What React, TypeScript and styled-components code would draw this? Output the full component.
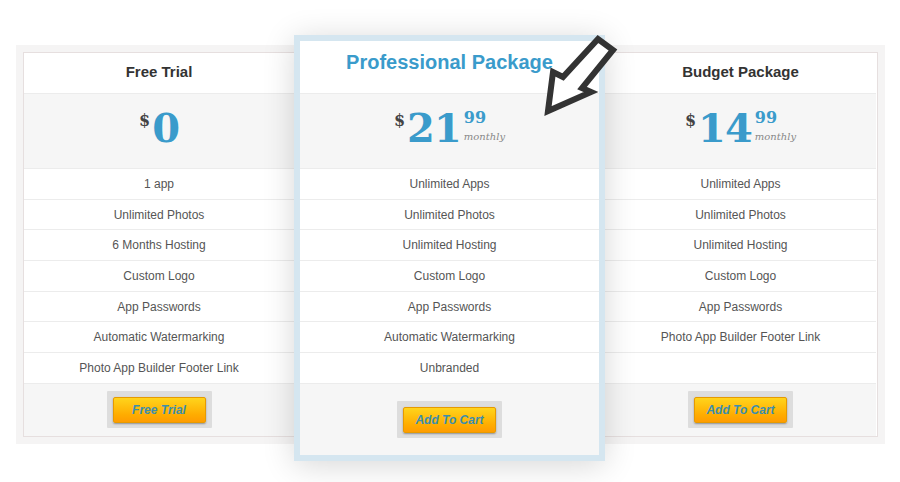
import React from 'react';
import styled, { createGlobalStyle } from 'styled-components';

const GlobalStyle = createGlobalStyle`
  html, body {
    margin: 0;
    padding: 0;
    background: #ffffff;
  }
  body {
    font-family: 'Liberation Sans', Arial, sans-serif;
  }
  * {
    box-sizing: border-box;
  }
`;

const Page = styled.div`
  padding: 45px 0 38px 16px;
  width: 885px;
  min-height: 482px;
`;

const Stage = styled.div`
  position: relative;
`;

const Frame = styled.div`
  background: #f5f4f4;
  padding: 7px;
`;

const Table = styled.div`
  display: flex;
  align-items: flex-start;
  border: 1px solid #e6dfdf;
  background: #ffffff;
`;

const Column = styled.div<{ width: number }>`
  width: ${(p) => p.width}px;
  flex-shrink: 0;
  display: flex;
  flex-direction: column;
  background: #ffffff;
`;

const FeaturedColumn = styled(Column)`
  margin: -18px 0 -25px;
  border: 6px solid #d5e6f0;
  box-shadow: 0 4px 30px rgba(0, 0, 0, 0.16);
  z-index: 1;
`;

const Header = styled.div<{ height: number; featured?: boolean }>`
  height: ${(p) => p.height}px;
  flex-shrink: 0;
  padding-top: 9px;
  text-align: center;
  font-size: ${(p) => (p.featured ? 20 : 15)}px;
  line-height: ${(p) => (p.featured ? 24 : 20)}px;
  font-weight: bold;
  color: ${(p) => (p.featured ? '#3a9bcb' : '#333333')};
`;

const PriceBox = styled.div`
  height: 75px;
  flex-shrink: 0;
  border-top: 1px solid #ececec;
  background: #f6f6f6;
  display: flex;
  justify-content: center;
  align-items: center;
  padding-bottom: 6px;
`;

const Price = styled.div`
  display: flex;
  align-items: flex-start;
  font-family: 'DejaVu Serif', 'Liberation Serif', serif;
  font-weight: bold;
`;

const Currency = styled.span`
  font-size: 16px;
  line-height: 16px;
  color: #444444;
  margin-top: 3px;
  margin-right: 2px;
`;

const Amount = styled.span`
  font-size: 40px;
  line-height: 36px;
  color: #3a9bcb;
  letter-spacing: -1px;
`;

const Cents = styled.div`
  display: flex;
  flex-direction: column;
  margin-left: 3px;
`;

const Sup = styled.span`
  font-size: 16px;
  line-height: 16px;
  color: #3a9bcb;
`;

const Period = styled.span`
  font-family: 'DejaVu Serif', 'Liberation Serif', serif;
  font-weight: normal;
  font-style: italic;
  font-size: 10px;
  line-height: 12px;
  color: #888888;
  margin-top: 5px;
`;

const Row = styled.div`
  height: 30.7px;
  flex-shrink: 0;
  border-top: 1px solid #ececec;
  display: flex;
  align-items: center;
  justify-content: center;
  font-size: 12px;
  color: #555555;
`;

const Footer = styled.div<{ height: number }>`
  height: ${(p) => p.height}px;
  flex-shrink: 0;
  border-top: 1px solid #ececec;
  background: #f6f6f6;
  display: flex;
  align-items: center;
  justify-content: center;
`;

const ButtonFrame = styled.div`
  background: #dddddd;
  padding: 6px 6px 5px;
  border-radius: 1px;
`;

const Button = styled.button`
  width: 93px;
  height: 26px;
  border: 1px solid #e69a00;
  border-radius: 2px;
  background: linear-gradient(#ffd41c, #ffac00 70%, #ff9c00);
  box-shadow: 0 1px 2px rgba(0, 0, 0, 0.35);
  font-family: 'Liberation Sans', Arial, sans-serif;
  font-size: 12px;
  font-style: italic;
  font-weight: bold;
  color: #3b8eae;
  padding: 0;
  cursor: pointer;
`;

const Arrow = styled.svg`
  position: absolute;
  left: 512px;
  top: -13px;
  width: 92px;
  height: 86px;
  z-index: 2;
`;

type Plan = {
  title: string;
  amount: string;
  cents?: string;
  features: string[];
  button: string;
};

const plans: Plan[] = [
  {
    title: 'Free Trial',
    amount: '0',
    features: [
      '1 app',
      'Unlimited Photos',
      '6 Months Hosting',
      'Custom Logo',
      'App Passwords',
      'Automatic Watermarking',
      'Photo App Builder Footer Link',
    ],
    button: 'Free Trial',
  },
  {
    title: 'Professional Package',
    amount: '21',
    cents: '99',
    features: [
      'Unlimited Apps',
      'Unlimited Photos',
      'Unlimited Hosting',
      'Custom Logo',
      'App Passwords',
      'Automatic Watermarking',
      'Unbranded',
    ],
    button: 'Add To Cart',
  },
  {
    title: 'Budget Package',
    amount: '14',
    cents: '99',
    features: [
      'Unlimited Apps',
      'Unlimited Photos',
      'Unlimited Hosting',
      'Custom Logo',
      'App Passwords',
      'Photo App Builder Footer Link',
      '',
    ],
    button: 'Add To Cart',
  },
];

function PlanBody({ plan, featured }: { plan: Plan; featured?: boolean }) {
  return (
    <>
      <Header height={featured ? 52 : 40} featured={featured}>
        {plan.title}
      </Header>
      <PriceBox>
        <Price>
          <Currency>$</Currency>
          <Amount>{plan.amount}</Amount>
          {plan.cents && (
            <Cents>
              <Sup>{plan.cents}</Sup>
              <Period>monthly</Period>
            </Cents>
          )}
        </Price>
      </PriceBox>
      {plan.features.map((f, i) => (
        <Row key={i}>{f}</Row>
      ))}
      <Footer height={featured ? 72 : 53}>
        <ButtonFrame>
          <Button>{plan.button}</Button>
        </ButtonFrame>
      </Footer>
    </>
  );
}

export default function App() {
  return (
    <Page>
      <GlobalStyle />
      <Stage>
        <Frame>
          <Table>
            <Column width={270}>
              <PlanBody plan={plans[0]} />
            </Column>
            <FeaturedColumn width={311}>
              <PlanBody plan={plans[1]} featured />
            </FeaturedColumn>
            <Column width={271}>
              <PlanBody plan={plans[2]} />
            </Column>
          </Table>
        </Frame>
        <Arrow viewBox="0 0 92 86">
          <polygon
            points="20,79 25,40 35,45 70,7 85,18 54,56 63,60"
            fill="#ffffff"
            stroke="#333333"
            strokeWidth="6"
            strokeLinejoin="miter"
          />
        </Arrow>
      </Stage>
    </Page>
  );
}
